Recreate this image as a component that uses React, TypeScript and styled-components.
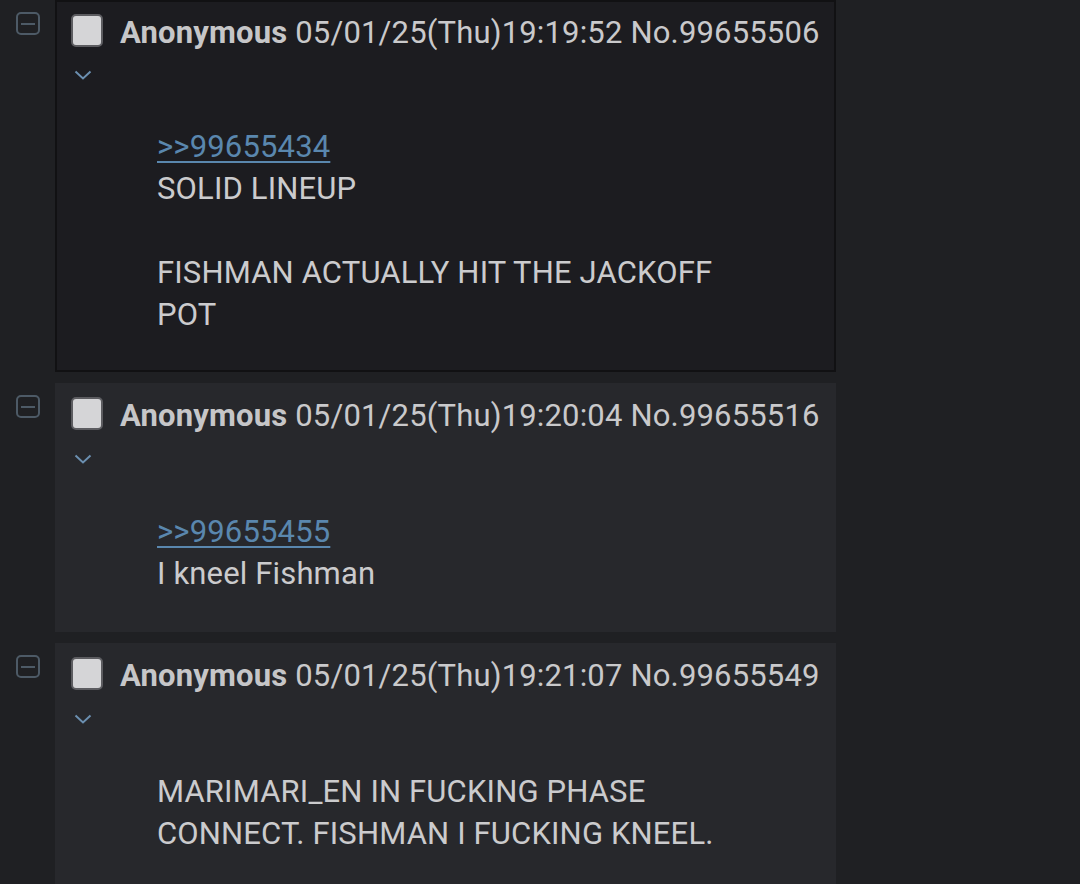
import React from 'react';
import styled, { createGlobalStyle } from 'styled-components';

const Global = createGlobalStyle`
  html, body {
    margin: 0;
    padding: 0;
    background: #1f2023;
  }
  body {
    font-family: Roboto, "Noto Sans", sans-serif;
    color: #c9c9cb;
    overflow: hidden;
  }
`;

const Thread = styled.div`
  display: flex;
  flex-direction: column;
  gap: 11px;
  height: 884px;
  overflow: hidden;
`;

const Row = styled.div`
  display: flex;
  align-items: flex-start;
`;

const Side = styled.div`
  width: 55px;
  flex-shrink: 0;
  padding: 12px 0 0 16px;
  box-sizing: border-box;
`;

const MinusBox = styled.div`
  width: 24px;
  height: 23px;
  box-sizing: border-box;
  border: 2px solid #4d5a66;
  border-radius: 5px;
  display: flex;
  align-items: center;
  justify-content: center;
  &::after {
    content: '';
    width: 14px;
    height: 2px;
    background: #4d5a66;
  }
`;

const Post = styled.div<{ $highlight?: boolean }>`
  width: 781px;
  box-sizing: border-box;
  background: ${(p) => (p.$highlight ? '#1c1c20' : '#27282c')};
  border: 2px solid ${(p) => (p.$highlight ? '#111113' : '#27282c')};
  padding: 12px 0 ${(p) => (p.$highlight ? 34 : 35)}px 14px;
`;

const Header = styled.div`
  display: flex;
  align-items: flex-start;
  gap: 17px;
`;

const Check = styled.div`
  width: 32px;
  height: 33px;
  box-sizing: border-box;
  border: 2px solid #5c5c60;
  border-radius: 5px;
  background: #d5d5d7;
  flex-shrink: 0;
`;

const Info = styled.div`
  margin-top: 1px;
  font-size: 31px;
  letter-spacing: 0.17px;
  line-height: 36px;
  white-space: nowrap;
  color: #c9c9cb;
`;

const Name = styled.span`
  font-weight: 700;
  color: #c6c6c8;
`;

const Menu = styled.div<{ $highlight?: boolean }>`
  margin: ${(p) => (p.$highlight ? 19 : 20)}px 0 0 3px;
  height: 10px;
  display: flex;
`;

const Body = styled.blockquote<{ $highlight?: boolean }>`
  margin: ${(p) => (p.$highlight ? 46 : 47)}px 80px 0 86px;
  font-size: 31px;
  letter-spacing: 0.15px;
  line-height: 42px;
  color: #cbcbcd;
`;

const Quote = styled.a`
  color: #5a87ae;
  text-decoration: underline;
  text-underline-offset: 4px;
  text-decoration-thickness: 2px;
`;

type PostData = {
  time: string;
  no: string;
  highlight?: boolean;
  lines: React.ReactNode[];
};

const posts: PostData[] = [
  {
    time: '05/01/25(Thu)19:19:52',
    no: '99655506',
    highlight: true,
    lines: [
      <Quote key="q">&gt;&gt;99655434</Quote>,
      'SOLID LINEUP',
      '',
      'FISHMAN ACTUALLY HIT THE JACKOFF POT',
    ],
  },
  {
    time: '05/01/25(Thu)19:20:04',
    no: '99655516',
    lines: [<Quote key="q">&gt;&gt;99655455</Quote>, 'I kneel Fishman'],
  },
  {
    time: '05/01/25(Thu)19:21:07',
    no: '99655549',
    lines: ['MARIMARI_EN IN FUCKING PHASE CONNECT. FISHMAN I FUCKING KNEEL.'],
  },
];

const Chevron = () => (
  <svg width="18" height="10" viewBox="0 0 18 10">
    <path d="M1.5 1.5 L9 8.5 L16.5 1.5" fill="none" stroke="#6b8fb0" strokeWidth="2" />
  </svg>
);

const App = () => (
  <>
    <Global />
    <Thread>
      {posts.map((p) => (
        <Row key={p.no}>
          <Side>
            <MinusBox />
          </Side>
          <Post $highlight={p.highlight}>
            <Header>
              <Check />
              <Info>
                <Name>Anonymous</Name> {p.time} No.{p.no}
              </Info>
            </Header>
            <Menu $highlight={p.highlight}>
              <Chevron />
            </Menu>
            <Body $highlight={p.highlight}>
              {p.lines.map((l, i) => (
                <div key={i}>{l === '' ? <br /> : l}</div>
              ))}
            </Body>
          </Post>
        </Row>
      ))}
    </Thread>
  </>
);

export default App;
